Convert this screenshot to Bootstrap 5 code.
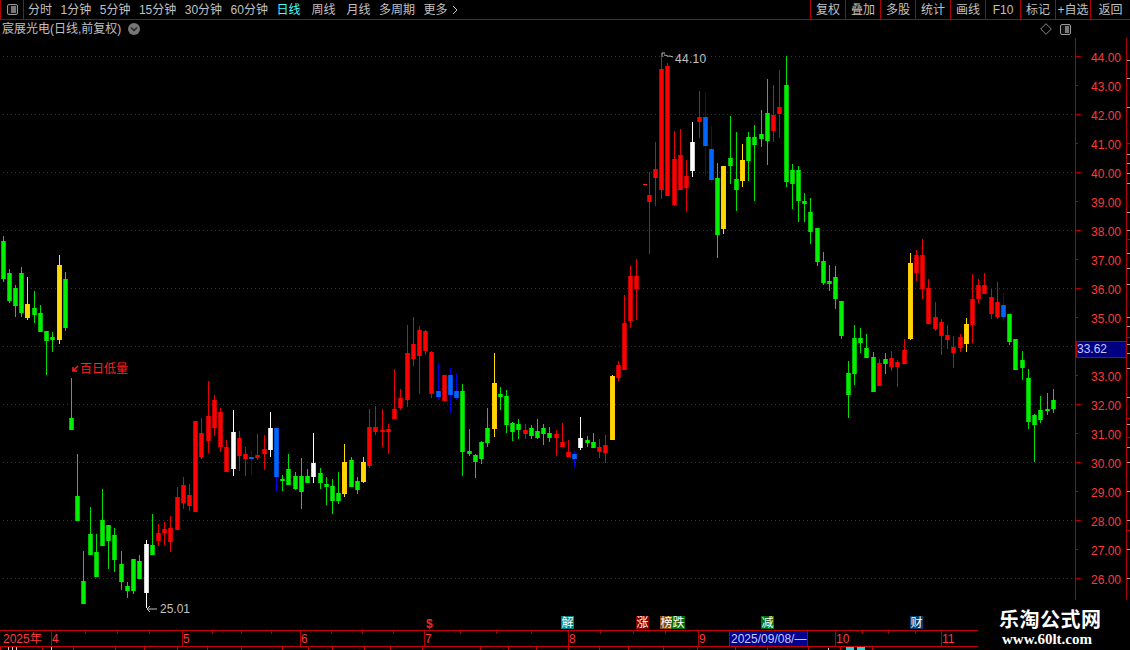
<!DOCTYPE html>
<html lang="zh-CN">
<head>
<meta charset="UTF-8">
<title>宸展光电 日线</title>
<link href="https://cdn.jsdelivr.net/npm/bootstrap@5.3.0/dist/css/bootstrap.min.css" rel="stylesheet">
<style>
html, body { background: #000; overflow: hidden; }
body {
  font-family: "Liberation Sans", "Noto Sans CJK SC", sans-serif;
  font-size: 12px;
  line-height: 1;
  color: #c0c0c0;
}
.kline-page { width: 1130px; height: 650px; background: #000; }
.top-bar { height: 20px; border-bottom: 1px solid #b00000; }
.side-cell { width: 24px; border-left: 1px solid #b00000; border-right: 1px solid #b00000; }
.period-list { padding-left: 4px; gap: 8.5px; }
.period-list .now { color: #40ffff; }
.period-list .wide-gap { margin-left: 2.5px; }
.tool-list { margin-left: auto; width: 320px; }
.tool-item { width: 35px; border-left: 1px solid #b00000; }
.tool-item:last-child { width: 40px; }
.title-row { height: 18px; padding: 0 4px 0 2px; }
.title-row .drop { margin-left: 7px; }
.title-tools { gap: 7px; margin-right: 54px; }
.chart-svg { display: block; }
.chart-svg text { font-family: "Liberation Sans", "Noto Sans CJK SC", sans-serif; font-size: 12px; }
.logo-box { left: 978px; top: 600px; width: 152px; height: 50px; background: #000; color: #fff; padding-top: 9px; }
.logo-name { font-family: "Noto Sans CJK SC", sans-serif; font-weight: 700; font-size: 20px; letter-spacing: .5px; padding-left: 21px; line-height: 20px; }
.logo-url { font-family: "Liberation Serif", serif; font-weight: 700; font-size: 15px; padding-left: 24px; line-height: 14px; margin-top: 3px; }
</style>
<script src="https://cdn.jsdelivr.net/npm/bootstrap@5.3.0/dist/js/bootstrap.bundle.min.js"></script>
</head>
<body>
<div class="kline-page position-relative">
  <div class="top-bar d-flex align-items-center">
    <div class="side-cell h-100 d-flex align-items-center justify-content-center">
      <svg width="13" height="13" viewBox="0 0 13 13"><rect x="1.5" y="1.5" width="10" height="10" rx="1.5" fill="#111" stroke="#999"/><rect x="5" y="3" width="5" height="7" fill="#777"/></svg>
    </div>
    <div class="period-list d-flex align-items-center">
      <span>分时</span><span>1分钟</span><span>5分钟</span><span>15分钟</span><span>30分钟</span><span>60分钟</span>
      <span class="now">日线</span><span class="wide-gap">周线</span><span class="wide-gap">月线</span><span>多周期</span>
      <span class="d-flex align-items-center gap-1">更多
        <svg width="6" height="10" viewBox="0 0 6 10"><path d="M1 1l4 4-4 4" fill="none" stroke="#c0c0c0"/></svg>
      </span>
    </div>
    <div class="tool-list d-flex h-100">
      <div class="tool-item d-flex align-items-center justify-content-center">复权</div>
      <div class="tool-item d-flex align-items-center justify-content-center">叠加</div>
      <div class="tool-item d-flex align-items-center justify-content-center">多股</div>
      <div class="tool-item d-flex align-items-center justify-content-center">统计</div>
      <div class="tool-item d-flex align-items-center justify-content-center">画线</div>
      <div class="tool-item d-flex align-items-center justify-content-center">F10</div>
      <div class="tool-item d-flex align-items-center justify-content-center">标记</div>
      <div class="tool-item d-flex align-items-center justify-content-center text-nowrap">+自选</div>
      <div class="tool-item d-flex align-items-center justify-content-center">返回</div>
    </div>
  </div>

  <div class="title-row d-flex align-items-center">
    <span>宸展光电(日线,前复权)</span>
    <svg class="drop" width="12" height="12" viewBox="0 0 12 12"><circle cx="6" cy="6" r="6" fill="#777"/><path d="M3 4.5l3 3 3-3" fill="none" stroke="#222" stroke-width="1.4"/></svg>
    <div class="title-tools d-flex align-items-center ms-auto">
      <svg width="12" height="12" viewBox="0 0 12 12"><path d="M6 .7L11.3 6 6 11.3.7 6z" fill="none" stroke="#888"/></svg>
      <svg width="13" height="13" viewBox="0 0 13 13"><rect x="1.5" y="1.5" width="10" height="10" rx="1.5" fill="#111" stroke="#999"/><rect x="6" y="3" width="4" height="7" fill="#777"/></svg>
    </div>
  </div>

  <svg id="chart" class="chart-svg" width="1130" height="612" viewBox="0 38 1130 612" shape-rendering="crispEdges">
    <g id="grid"></g>
    <g id="candles"></g>
    <g id="axis"></g>
    <g id="timeline"></g>
    <rect x="643" y="184" width="4" height="1" fill="#ff2020"/>
    <g fill="none" stroke="#ff2020" stroke-width="1.5" shape-rendering="auto">
      <path d="M78 366l-5 5M73 367v4h4"/>
    </g>
    <text x="80" y="373" fill="#ff2020">百日低量</text>
    <g fill="none" stroke="#c0c0c0" shape-rendering="auto">
      <path d="M662 57v-4h3M664 55c3 0 3 2 6 1l3 1"/>
      <path d="M147 609h10M147 609l3-3M147 609l3 3"/>
    </g>
    <text x="675" y="63" fill="#c0c0c0" letter-spacing=".3">44.10</text>
    <text x="160" y="613" fill="#c0c0c0">25.01</text>
    <rect x="1076" y="341" width="50" height="16" fill="#000080" stroke="#b00000"/>
    <text x="1077" y="353" fill="#c8c8ff">33.62</text>
  </svg>

  <div class="logo-box position-absolute">
    <div class="logo-name">乐淘公式网</div>
    <div class="logo-url">www.60lt.com</div>
  </div>
</div>

<script>
// x, wick top, wick bottom, body top, body bottom, colour (pixels on the picture)
const G = 'g', R = 'r', Y = 'y', W = 'w', B = 'b';
const candles = [
[3,236,282,241,279,G],[9,269,303,273,301,G],[15,285,317,288,306,G],[21,267,317,273,313,G],[27,277,320,304,318,Y],
[34,291,323,308,315,G],[40,305,332,313,332,G],[46,331,375,331,341,G],[52,332,352,337,340,G],[59,255,344,265,340,Y],
[65,272,331,279,328,G],[71,378,430,418,430,G],[77,454,521,496,521,G],[83,551,604,581,604,G],[90,507,555,534,555,G],
[96,534,577,552,577,G],[102,489,546,520,546,G],[108,525,569,525,541,G],[114,528,572,535,560,G],[121,551,590,564,582,G],
[127,582,598,586,591,G],[133,559,594,559,591,G],[139,555,579,561,579,G],[146,540,608,544,593,W],[152,514,555,545,555,G],
[158,524,546,533,541,R],[164,522,545,529,533,R],[170,516,552,528,542,R],[177,487,530,497,530,R],[183,477,509,485,503,R],
[189,484,511,495,506,R],[195,421,512,421,512,R],[201,418,459,433,457,R],[208,381,453,416,441,R],[214,395,436,400,428,R],
[220,408,452,412,447,R],[226,440,472,447,472,R],[233,410,476,432,469,W],[239,431,471,438,456,R],[245,447,476,454,459,R],
[251,451,475,457,459,B],[257,434,460,455,458,R],[264,435,470,449,454,R],[270,412,457,428,450,W],[276,428,491,428,477,B],
[282,475,491,479,481,G],[288,454,485,469,485,G],[295,472,490,476,489,G],[301,458,509,476,492,G],[307,469,483,476,483,G],
[313,433,483,463,477,W],[320,468,489,473,483,G],[326,477,505,484,487,G],[332,479,514,486,501,G],[338,472,504,493,501,G],
[344,444,497,462,494,Y],[351,457,487,460,487,G],[357,477,494,481,490,G],[363,457,483,462,482,Y],[369,409,468,427,466,R],
[375,406,435,427,432,R],[382,409,447,430,432,R],[388,424,454,429,432,R],[394,369,419,409,419,R],[400,389,410,398,408,R],
[407,325,407,353,400,R],[413,317,366,344,359,R],[419,326,394,330,356,R],[425,330,355,331,351,R],[431,351,398,352,394,R],
[438,363,400,391,397,B],[444,375,401,375,401,R],[450,368,413,375,395,B],[456,373,400,391,398,B],[462,384,476,391,452,G],
[469,429,456,451,454,G],[475,454,478,455,462,G],[481,441,464,442,459,G],[487,408,447,428,443,G],[494,353,437,383,429,Y],
[500,387,410,394,397,G],[506,390,433,396,425,G],[512,422,441,423,432,G],[518,419,439,424,430,G],[525,424,439,430,434,R],
[531,425,439,428,436,G],[537,419,439,431,438,G],[543,424,445,428,434,G],[549,427,442,433,438,G],[556,430,456,434,438,R],
[562,423,447,442,447,R],[568,440,457,452,457,R],[574,451,467,454,459,B],[580,417,450,438,448,W],[587,436,447,440,443,G],
[593,433,448,442,448,G],[599,439,458,447,452,R],[605,435,463,445,453,R],[612,375,440,376,440,Y],[618,361,381,365,378,R],
[624,295,370,323,370,R],[630,266,328,276,321,R],[636,259,320,276,289,R],[649,172,254,195,202,R],[655,142,206,169,178,R],
[661,57,199,69,190,R],[667,63,196,66,196,R],[674,131,206,159,205,R],[680,129,190,155,190,R],[686,160,212,176,188,R],
[692,122,177,142,171,W],[699,91,138,117,122,R],[705,92,176,117,146,B],[711,126,183,149,180,B],[717,163,258,178,235,G],
[723,166,234,166,229,Y],[730,116,184,158,166,G],[736,132,211,179,190,G],[742,144,187,160,181,Y],[748,132,181,137,161,G],
[754,125,201,137,145,G],[761,110,147,134,139,G],[767,79,165,113,141,G],[773,85,142,115,131,R],[779,70,138,107,114,R],
[786,56,187,85,182,G],[792,164,209,170,184,G],[798,166,222,170,201,G],[804,193,222,201,204,G],[810,198,244,212,232,G],
[817,228,266,228,262,G],[823,252,285,261,283,G],[829,265,291,281,284,G],[835,266,309,277,299,G],[841,301,339,301,336,G],
[848,361,418,373,395,G],[854,325,385,338,374,G],[860,328,353,338,343,G],[866,334,358,348,358,G],[873,352,392,357,392,G],
[879,359,386,363,386,R],[885,353,374,359,364,G],[891,351,371,358,367,R],[897,360,387,362,367,R],[904,339,364,350,364,R],
[910,253,340,263,339,Y],[916,250,281,255,273,R],[922,239,299,255,289,R],[928,279,324,288,324,R],[935,302,331,317,329,R],
[941,319,355,322,336,R],[947,325,349,335,340,R],[953,336,368,347,353,R],[960,334,352,337,348,R],[966,318,352,324,344,Y],
[972,274,343,299,325,R],[978,279,303,285,299,R],[984,273,294,285,294,R],[991,289,319,297,314,R],[997,282,319,302,317,R],
[1003,293,321,305,317,B],[1009,314,345,314,342,G],[1015,339,370,339,370,G],[1022,351,380,360,368,G],[1028,369,429,378,422,G],
[1034,414,462,415,425,G],[1040,396,423,410,420,G],[1047,393,415,409,411,G],[1053,389,413,400,409,G]
];
const colours = {
  g: { wick: '#00e000', edge: '#00b800', core: '#00f000' },
  r: { wick: '#e80000', edge: '#c00000', core: '#ff0000' },
  y: { wick: '#ffe000', edge: '#ffc800', core: '#ffd800' },
  w: { wick: '#ffffff', edge: '#d0d0d0', core: '#ffffff' },
  b: { wick: '#0000e8', edge: '#0050d8', core: '#0064ff' }
};
const LINE = '#b00000', LABEL = '#ff3838';

function rect(x, y, w, h, fill) {
  return `<rect x="${x}" y="${y}" width="${w}" height="${h}" fill="${fill}"/>`;
}
function priceY(p) { return 56.5 + (44 - p) * 29; }

let html = '';
for (const [x, wt, wb, bt, bb, c] of candles) {
  const col = colours[c];
  html += rect(x, wt, 1, wb - wt, col.wick);
  html += rect(x - 2, bt, 5, bb - bt, col.edge);
  html += rect(x - 1, bt, 3, bb - bt, col.core);
}
document.getElementById('candles').innerHTML = html;

// dotted price grid and the price scale
let grid = '', axis = '';
for (let p = 44; p >= 26; p--) {
  const y = priceY(p), even = p % 2 === 0;
  if (even) grid += `<path d="M3 ${y}H1075" stroke="#b00000" stroke-dasharray="1 3" fill="none"/>`;
  axis += rect(1075, Math.floor(y), even ? 6 : 3, 1, LINE);
  // 34.00 sits under the last price box
  if (p !== 34) axis += `<text x="1091" y="${y + 5}" fill="${LABEL}">${p}.00</text>`;
}
document.getElementById('grid').innerHTML = grid;
axis = rect(1075, 20, 1, 580, LINE) + rect(1126, 20, 1, 580, LINE) + axis;
for (const y of [60, 78, 107, 154, 163, 173, 183, 212, 230, 253, 268, 284, 317, 326, 344, 353, 368, 397, 424, 447, 462, 491, 520, 549, 578])
  axis += rect(1127, y, 3, 1, '#a0a0a0');
for (const y of [143, 239, 337, 418, 437, 530]) axis += rect(1127, y, 3, 1, LINE);
document.getElementById('axis').innerHTML = axis;

// time scale below the chart
let time = rect(0, 630, 978, 1, '#c80000') + rect(0, 646, 978, 1, '#c80000');
for (const [x, t] of [[51,'4'],[182,'5'],[300,'6'],[424,'7'],[568,'8'],[698,'9'],[835,'10'],[941,'11']]) {
  time += rect(x, 631, 1, 15, LINE);
  time += `<text x="${x + 1}" y="643" fill="${LABEL}">${t}</text>`;
}
for (const x of [85,117,149,212,241,271,331,362,393,460,496,531,600,633,665,862,888,915])
  time += rect(x, 631, 1, 3, LINE);
for (const x of [0,42,73,115,144,177,207,241,282,308,332,364,390,422,480,508,536,568,599,628,663,697,735,767,808,840,872])
  time += rect(x, 647, 1, 3, '#c80000');
time += `<text x="3" y="643" fill="${LABEL}">2025年</text>`;
time += rect(729, 631, 78, 15, '#000090') + rect(729, 631, 1, 15, LINE) + rect(807, 631, 1, 15, LINE);
time += `<text x="731" y="643" fill="#c8c8ff">2025/09/08/—</text>`;
time += rect(8, 647, 1, 3, '#d0d0d0') + rect(12, 647, 1, 3, '#d0d0d0') + rect(16, 647, 1, 3, '#d0d0d0') + rect(51, 647, 1, 3, '#d0d0d0');
time += rect(828, 648, 1, 2, '#d0d0d0') + rect(846, 647, 8, 3, '#30d0d0') + rect(857, 647, 8, 3, '#30d0d0');
// event badges
for (const [x, t, bg] of [[561,'解','#008080'],[636,'涨','#800000'],[660,'榜','#8b4a00'],[672,'跌','#007000'],[761,'减','#007000'],[910,'财','#004070']]) {
  time += rect(x, 616, 13, 13, bg);
  time += `<text x="${x + .5}" y="627" fill="#fff">${t}</text>`;
}
time += `<text x="426" y="628" fill="#ff2020" font-weight="700">$</text>`;
document.getElementById('timeline').innerHTML = time;
</script>
</body>
</html>
